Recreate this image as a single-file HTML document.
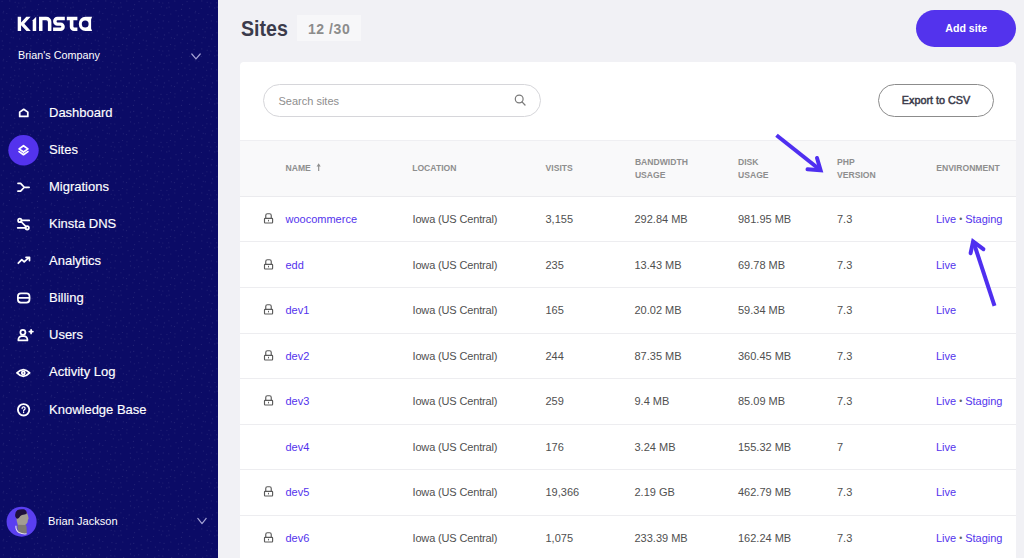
<!DOCTYPE html>
<html><head><meta charset="utf-8">
<style>
*{box-sizing:border-box;margin:0;padding:0}
html,body{width:1024px;height:558px;overflow:hidden;background:#f1f1f5;font-family:"Liberation Sans",sans-serif}
#side{position:absolute;left:0;top:0;width:218px;height:558px;background:#0b0b66}
.abs{position:absolute;white-space:nowrap}
.nav{position:absolute;left:49px;color:#fff;font-size:13px;line-height:16px;white-space:nowrap;-webkit-text-stroke:0.15px #fff}
.ico{position:absolute;overflow:visible}
.th{position:absolute;color:#8e8e8e;font-size:8.6px;font-weight:bold;line-height:13px;text-transform:uppercase;white-space:nowrap}
.td{position:absolute;color:#505050;font-size:11px;line-height:14px;white-space:nowrap}
.lnk{color:#5333ed}
.dot{color:#666;font-size:8.5px;margin:0 3px;position:relative;top:-1px}
.hr{position:absolute;left:240px;width:776.4px;height:1px;background:#ededf0}
</style></head><body>
<div id="side">
  <svg class="ico" style="left:0;top:0" width="218" height="558"><defs><pattern id="dp" width="48" height="48" patternUnits="userSpaceOnUse"><g fill="#fff" fill-opacity="0.10"><circle cx="2.1" cy="1.3" r="0.55"/><circle cx="9.8" cy="0.9" r="0.55"/><circle cx="15.2" cy="2.3" r="0.55"/><circle cx="18.8" cy="3.0" r="0.55"/><circle cx="24.7" cy="2.7" r="0.55"/><circle cx="30.8" cy="1.0" r="0.55"/><circle cx="38.6" cy="4.6" r="0.55"/><circle cx="43.1" cy="1.6" r="0.55"/><circle cx="3.6" cy="11.2" r="0.55"/><circle cx="9.4" cy="8.5" r="0.55"/><circle cx="17.4" cy="6.7" r="0.55"/><circle cx="22.8" cy="7.9" r="0.55"/><circle cx="25.2" cy="7.1" r="0.55"/><circle cx="32.0" cy="10.6" r="0.55"/><circle cx="37.4" cy="9.4" r="0.55"/><circle cx="45.7" cy="8.4" r="0.55"/><circle cx="3.2" cy="12.8" r="0.55"/><circle cx="6.8" cy="13.5" r="0.55"/><circle cx="15.9" cy="14.6" r="0.55"/><circle cx="20.1" cy="15.4" r="0.55"/><circle cx="26.8" cy="14.0" r="0.55"/><circle cx="34.5" cy="16.0" r="0.55"/><circle cx="37.7" cy="15.4" r="0.55"/><circle cx="45.1" cy="16.9" r="0.55"/><circle cx="4.1" cy="19.9" r="0.55"/><circle cx="11.4" cy="19.1" r="0.55"/><circle cx="14.6" cy="22.3" r="0.55"/><circle cx="19.3" cy="20.9" r="0.55"/><circle cx="24.7" cy="21.8" r="0.55"/><circle cx="34.3" cy="21.4" r="0.55"/><circle cx="40.9" cy="20.1" r="0.55"/><circle cx="46.0" cy="21.5" r="0.55"/><circle cx="3.4" cy="26.8" r="0.55"/><circle cx="10.7" cy="29.2" r="0.55"/><circle cx="14.9" cy="27.8" r="0.55"/><circle cx="18.8" cy="28.0" r="0.55"/><circle cx="27.7" cy="29.5" r="0.55"/><circle cx="34.6" cy="25.9" r="0.55"/><circle cx="38.4" cy="27.8" r="0.55"/><circle cx="42.6" cy="26.8" r="0.55"/><circle cx="1.3" cy="31.1" r="0.55"/><circle cx="6.8" cy="34.3" r="0.55"/><circle cx="13.1" cy="31.7" r="0.55"/><circle cx="20.5" cy="34.9" r="0.55"/><circle cx="24.9" cy="32.7" r="0.55"/><circle cx="33.2" cy="34.9" r="0.55"/><circle cx="40.6" cy="34.8" r="0.55"/><circle cx="43.9" cy="32.6" r="0.55"/><circle cx="2.3" cy="40.9" r="0.55"/><circle cx="11.3" cy="37.3" r="0.55"/><circle cx="13.4" cy="37.7" r="0.55"/><circle cx="19.7" cy="38.9" r="0.55"/><circle cx="27.4" cy="37.8" r="0.55"/><circle cx="30.5" cy="38.6" r="0.55"/><circle cx="38.3" cy="39.3" r="0.55"/><circle cx="47.3" cy="40.0" r="0.55"/><circle cx="3.1" cy="45.6" r="0.55"/><circle cx="9.9" cy="42.8" r="0.55"/><circle cx="17.0" cy="46.4" r="0.55"/><circle cx="22.9" cy="46.5" r="0.55"/><circle cx="26.5" cy="44.5" r="0.55"/><circle cx="31.0" cy="45.7" r="0.55"/><circle cx="36.8" cy="42.8" r="0.55"/><circle cx="43.5" cy="43.3" r="0.55"/></g></pattern></defs><rect width="218" height="558" fill="url(#dp)"/></svg>
  <svg class="ico" style="left:0;top:0" width="100" height="40" viewBox="0 0 100 40">
    <g fill="#fff">
      <path d="M17.7 16.7H21.1V22.6L26.3 16.7H30.6L24.3 23.8L30.8 31.1H26.5L21.1 25.2V31.1H17.7Z"/>
      <path d="M32.7 20.3L36.2 16.7V31.1H32.7Z"/>
      <path d="M39 16.7H46.4A5 5 0 0 1 51.4 21.7V31.1H47.9V22A1.7 1.7 0 0 0 46.2 20.3H42.5V31.1H39Z"/>
      <path d="M57.6 16.7H64.8V20.3H57.6A1 1 0 0 0 56.6 21.3V21.6A0.9 0.9 0 0 0 57.5 22.5H60.5A4.3 4.3 0 0 1 64.8 26.8V26.9A4.2 4.2 0 0 1 60.6 31.1H53.1V27.5H60.3A1 1 0 0 0 61.3 26.5V26.6A0.9 0.9 0 0 0 60.4 25.7H57.4A4.3 4.3 0 0 1 53.1 21.4V21A4.3 4.3 0 0 1 57.4 16.7Z"/>
      <path d="M66.8 16.7H77.4V20.3H73.4V26.5A1 1 0 0 0 74.4 27.5H77.4V31.1H74A4.2 4.2 0 0 1 69.8 26.9V20.3H66.8Z"/>
      <path fill-rule="evenodd" d="M85.4 16.7H92.1L91.1 19.4V28.4L92.1 31.1H85.4A6.6 7.2 0 0 1 85.4 16.7ZM85.2 20.4A3.4 3.5 0 1 0 85.2 27.4A3.4 3.5 0 1 0 85.2 20.4Z"/>
    </g>
  </svg>
  <div class="abs" style="left:18px;top:48px;color:#fff;font-size:10.8px;line-height:14px">Brian's Company</div>
  <svg class="ico" style="left:0;top:0" width="218" height="558" viewBox="0 0 218 558">
    <g fill="none" stroke="#a4a2d4" stroke-width="1.2" stroke-linecap="round" stroke-linejoin="round">
      <path d="M191.8 54L196 58.8L200.2 54"/>
      <path d="M197.8 518.4L202 523.6L206.2 518.4"/>
    </g>
    <circle cx="23.5" cy="150.3" r="15.2" fill="#5333ed"/>
    <g fill="none" stroke="#fff" stroke-width="1.75" stroke-linecap="round" stroke-linejoin="round">
      <path d="M19.7 116.4V112.1L23.75 109.3L27.8 112.1V116.4Z"/>
      <path d="M23.5 145.7L27.9 148.9L23.5 152L19.1 148.9Z"/>
      <path d="M19.1 151.6L23.5 154.7L27.9 151.6"/>
      <path d="M18 183.3H20.6L24.3 187.25L20.6 191.2H18M24.3 187.25H29.1"/>
      <path d="M21.5 220.4H29.2M17.7 227.8H25.5M20.9 221.5L26 226.6"/>
      <circle cx="19.8" cy="220.4" r="1.7"/>
      <circle cx="27.2" cy="227.8" r="1.7"/>
      <path d="M18.3 263.2L21.8 259.7L24.2 261.9L29.1 257.4M26 257.3H29.5V260.6"/>
      <rect x="17.9" y="293.3" width="11.6" height="9.2" rx="3"/>
      <path d="M18 297.9H29.4"/>
      <circle cx="22.9" cy="332.3" r="2.5"/>
      <path d="M18.4 340.4V339.6A3.4 3.4 0 0 1 21.8 336.2H24A3.4 3.4 0 0 1 27.4 339.6V340.4Z"/>
      <path d="M31.1 329.8V333.4M29.3 331.6H32.9"/>
      <path d="M17 372.9Q23.3 366.3 29.6 372.9Q23.3 379.5 17 372.9Z" stroke-width="1.9"/>
      <circle cx="23.3" cy="372.9" r="1.5" stroke-width="1.8"/>
      <circle cx="23.6" cy="409.8" r="5.7" stroke-width="1.85"/>
      <path d="M22.1 408.5A1.5 1.5 0 1 1 24.2 409.8Q23.6 410.2 23.6 411" stroke-width="1.3"/>
    </g>
    <circle cx="23.6" cy="412.5" r="0.7" fill="#fff"/>
    <circle cx="21.6" cy="521.7" r="15" fill="#5a3ff0"/>
    <path d="M17.7 523L24.9 523.5Q26.6 525.6 26.6 527L26.8 533.3Q22 534.2 18.5 532Q16.8 529 17.7 524.1Z" fill="#7e7a73"/>
    <path d="M15.9 525.8Q15.6 530.5 19 532.6Q22.5 534.4 26.6 533.8" fill="none" stroke="#e9e7e2" stroke-width="1.1"/>
    <path d="M16.6 517L21 512L26.7 512Q28.3 516 28.6 518.4L27.9 520Q27.7 521.5 27.5 522.6Q26.5 524.6 24.9 524.9L17.9 524.8Q16.2 522 16.6 517Z" fill="#a39d92"/>
    <path d="M15.1 515Q15.2 511.3 17.5 510Q20 508.8 24.1 509.3Q26.8 510.4 26.9 513Q26.8 514.2 24.5 514.6Q21.5 515 20.3 516Q19.5 517.5 18.5 518.3Q17.2 519.2 16.3 518.3Q15 517 15.1 515Z" fill="#1e0f3c"/>
  </svg>

  <div class="nav" style="top:104.5px">Dashboard</div>
  <div class="nav" style="top:141.5px">Sites</div>
  <div class="nav" style="top:178.5px">Migrations</div>
  <div class="nav" style="top:215.5px">Kinsta DNS</div>
  <div class="nav" style="top:252.5px">Analytics</div>
  <div class="nav" style="top:289.5px">Billing</div>
  <div class="nav" style="top:326.5px">Users</div>
  <div class="nav" style="top:363.5px">Activity Log</div>
  <div class="nav" style="top:401.5px">Knowledge Base</div>

  <div class="abs" style="left:48px;top:513.7px;color:#fff;font-size:11.1px;line-height:14px">Brian Jackson</div>
</div>

<div class="abs" style="left:241px;top:17px;color:#3b3b4b;font-size:22.5px;font-weight:bold;line-height:24px;transform:scaleX(0.87);transform-origin:0 0">Sites</div>
<div class="abs" style="left:297px;top:15px;width:64px;height:26px;background:#f7f7f9"></div>
<div class="abs" style="left:308px;top:20px;color:#8c8c8c;font-size:14px;font-weight:bold;line-height:18px;letter-spacing:0.55px">12 /30</div>
<div class="abs" style="left:916px;top:10px;width:100.4px;height:37px;border-radius:19px;background:#5333ed;color:#fff;font-size:10.6px;font-weight:bold;text-align:center;line-height:37.5px">Add site</div>

<div class="abs" style="left:240px;top:61.5px;width:776.4px;height:520px;background:#fff;border-radius:4px"></div>
<div class="abs" style="left:263px;top:84.3px;width:277.5px;height:32.3px;border:1px solid #d6d6da;border-radius:17px"></div>
<div class="abs" style="left:278.5px;top:94px;color:#8e8e8e;font-size:11px;line-height:14px">Search sites</div>
<svg class="ico" style="left:0;top:0" width="1024" height="200" viewBox="0 0 1024 200">
  <circle cx="519.2" cy="99" r="3.9" fill="none" stroke="#7a7a7a" stroke-width="1.2"/>
  <path d="M522 101.9L525 105" stroke="#7a7a7a" stroke-width="1.3" stroke-linecap="round"/>
</svg>
<div class="abs" style="left:878.3px;top:84.1px;width:115.5px;height:32.6px;border:1px solid #8c8c8c;border-radius:17px;color:#3b3b4b;font-size:10.8px;-webkit-text-stroke:0.5px #3b3b4b;text-align:center;line-height:31.4px">Export to CSV</div>

<div class="abs" style="left:240px;top:140px;width:776.4px;height:57.2px;background:#f9f9fa;border-top:1px solid #efeff2;border-bottom:1px solid #ebebee"></div>
<div class="th" style="left:285.5px;top:162px">Name</div>
<svg class="ico" style="left:0;top:0" width="400" height="200" viewBox="0 0 400 200"><path d="M316.6 166.6L318.65 163.3L320.7 166.6Z" fill="#8e8e8e"/><rect x="318.1" y="165" width="1.15" height="6" fill="#8e8e8e"/></svg>
<div class="th" style="left:412.2px;top:162px">Location</div>
<div class="th" style="left:545.6px;top:162px">Visits</div>
<div class="th" style="left:634.9px;top:155.5px">Bandwidth<br>Usage</div>
<div class="th" style="left:738px;top:155.5px">Disk<br>Usage</div>
<div class="th" style="left:837px;top:155.5px">PHP<br>Version</div>
<div class="th" style="left:936.2px;top:162px">Environment</div>

<svg class="ico" style="left:262px;top:213.10px" width="13" height="11" viewBox="0 0 13 11"><path d="M3.75 5.3V2.4A1.65 1.65 0 0 1 5.4 0.75H7.6A1.65 1.65 0 0 1 9.25 2.4V5.3" fill="none" stroke="#5a5a5a" stroke-width="1.15"/><rect x="2.5" y="5.4" width="8.1" height="4.55" rx="0.6" fill="none" stroke="#5a5a5a" stroke-width="1.15"/><rect x="6.05" y="6.8" width="0.95" height="1.6" fill="#5a5a5a"/></svg>
<div class="td lnk" style="left:285.5px;top:212.00px">woocommerce</div>
<div class="td" style="left:412.5px;top:212.00px;letter-spacing:-0.15px">Iowa (US Central)</div>
<div class="td" style="left:545.5px;top:212.00px">3,155</div>
<div class="td" style="left:634.5px;top:212.00px">292.84 MB</div>
<div class="td" style="left:738px;top:212.00px">981.95 MB</div>
<div class="td" style="left:837px;top:212.00px">7.3</div>
<div class="td" style="left:936px;top:212.00px"><span class="lnk">Live</span><span class="dot">&#8226;</span><span class="lnk">Staging</span></div>
<div class="hr" style="top:241.44px"></div>
<svg class="ico" style="left:262px;top:258.64px" width="13" height="11" viewBox="0 0 13 11"><path d="M3.75 5.3V2.4A1.65 1.65 0 0 1 5.4 0.75H7.6A1.65 1.65 0 0 1 9.25 2.4V5.3" fill="none" stroke="#5a5a5a" stroke-width="1.15"/><rect x="2.5" y="5.4" width="8.1" height="4.55" rx="0.6" fill="none" stroke="#5a5a5a" stroke-width="1.15"/><rect x="6.05" y="6.8" width="0.95" height="1.6" fill="#5a5a5a"/></svg>
<div class="td lnk" style="left:285.5px;top:257.54px">edd</div>
<div class="td" style="left:412.5px;top:257.54px;letter-spacing:-0.15px">Iowa (US Central)</div>
<div class="td" style="left:545.5px;top:257.54px">235</div>
<div class="td" style="left:634.5px;top:257.54px">13.43 MB</div>
<div class="td" style="left:738px;top:257.54px">69.78 MB</div>
<div class="td" style="left:837px;top:257.54px">7.3</div>
<div class="td" style="left:936px;top:257.54px"><span class="lnk">Live</span></div>
<div class="hr" style="top:286.98px"></div>
<svg class="ico" style="left:262px;top:304.18px" width="13" height="11" viewBox="0 0 13 11"><path d="M3.75 5.3V2.4A1.65 1.65 0 0 1 5.4 0.75H7.6A1.65 1.65 0 0 1 9.25 2.4V5.3" fill="none" stroke="#5a5a5a" stroke-width="1.15"/><rect x="2.5" y="5.4" width="8.1" height="4.55" rx="0.6" fill="none" stroke="#5a5a5a" stroke-width="1.15"/><rect x="6.05" y="6.8" width="0.95" height="1.6" fill="#5a5a5a"/></svg>
<div class="td lnk" style="left:285.5px;top:303.08px">dev1</div>
<div class="td" style="left:412.5px;top:303.08px;letter-spacing:-0.15px">Iowa (US Central)</div>
<div class="td" style="left:545.5px;top:303.08px">165</div>
<div class="td" style="left:634.5px;top:303.08px">20.02 MB</div>
<div class="td" style="left:738px;top:303.08px">59.34 MB</div>
<div class="td" style="left:837px;top:303.08px">7.3</div>
<div class="td" style="left:936px;top:303.08px"><span class="lnk">Live</span></div>
<div class="hr" style="top:332.52px"></div>
<svg class="ico" style="left:262px;top:349.72px" width="13" height="11" viewBox="0 0 13 11"><path d="M3.75 5.3V2.4A1.65 1.65 0 0 1 5.4 0.75H7.6A1.65 1.65 0 0 1 9.25 2.4V5.3" fill="none" stroke="#5a5a5a" stroke-width="1.15"/><rect x="2.5" y="5.4" width="8.1" height="4.55" rx="0.6" fill="none" stroke="#5a5a5a" stroke-width="1.15"/><rect x="6.05" y="6.8" width="0.95" height="1.6" fill="#5a5a5a"/></svg>
<div class="td lnk" style="left:285.5px;top:348.62px">dev2</div>
<div class="td" style="left:412.5px;top:348.62px;letter-spacing:-0.15px">Iowa (US Central)</div>
<div class="td" style="left:545.5px;top:348.62px">244</div>
<div class="td" style="left:634.5px;top:348.62px">87.35 MB</div>
<div class="td" style="left:738px;top:348.62px">360.45 MB</div>
<div class="td" style="left:837px;top:348.62px">7.3</div>
<div class="td" style="left:936px;top:348.62px"><span class="lnk">Live</span></div>
<div class="hr" style="top:378.06px"></div>
<svg class="ico" style="left:262px;top:395.26px" width="13" height="11" viewBox="0 0 13 11"><path d="M3.75 5.3V2.4A1.65 1.65 0 0 1 5.4 0.75H7.6A1.65 1.65 0 0 1 9.25 2.4V5.3" fill="none" stroke="#5a5a5a" stroke-width="1.15"/><rect x="2.5" y="5.4" width="8.1" height="4.55" rx="0.6" fill="none" stroke="#5a5a5a" stroke-width="1.15"/><rect x="6.05" y="6.8" width="0.95" height="1.6" fill="#5a5a5a"/></svg>
<div class="td lnk" style="left:285.5px;top:394.16px">dev3</div>
<div class="td" style="left:412.5px;top:394.16px;letter-spacing:-0.15px">Iowa (US Central)</div>
<div class="td" style="left:545.5px;top:394.16px">259</div>
<div class="td" style="left:634.5px;top:394.16px">9.4 MB</div>
<div class="td" style="left:738px;top:394.16px">85.09 MB</div>
<div class="td" style="left:837px;top:394.16px">7.3</div>
<div class="td" style="left:936px;top:394.16px"><span class="lnk">Live</span><span class="dot">&#8226;</span><span class="lnk">Staging</span></div>
<div class="hr" style="top:423.60px"></div>
<div class="td lnk" style="left:285.5px;top:439.70px">dev4</div>
<div class="td" style="left:412.5px;top:439.70px;letter-spacing:-0.15px">Iowa (US Central)</div>
<div class="td" style="left:545.5px;top:439.70px">176</div>
<div class="td" style="left:634.5px;top:439.70px">3.24 MB</div>
<div class="td" style="left:738px;top:439.70px">155.32 MB</div>
<div class="td" style="left:837px;top:439.70px">7</div>
<div class="td" style="left:936px;top:439.70px"><span class="lnk">Live</span></div>
<div class="hr" style="top:469.14px"></div>
<svg class="ico" style="left:262px;top:486.34px" width="13" height="11" viewBox="0 0 13 11"><path d="M3.75 5.3V2.4A1.65 1.65 0 0 1 5.4 0.75H7.6A1.65 1.65 0 0 1 9.25 2.4V5.3" fill="none" stroke="#5a5a5a" stroke-width="1.15"/><rect x="2.5" y="5.4" width="8.1" height="4.55" rx="0.6" fill="none" stroke="#5a5a5a" stroke-width="1.15"/><rect x="6.05" y="6.8" width="0.95" height="1.6" fill="#5a5a5a"/></svg>
<div class="td lnk" style="left:285.5px;top:485.24px">dev5</div>
<div class="td" style="left:412.5px;top:485.24px;letter-spacing:-0.15px">Iowa (US Central)</div>
<div class="td" style="left:545.5px;top:485.24px">19,366</div>
<div class="td" style="left:634.5px;top:485.24px">2.19 GB</div>
<div class="td" style="left:738px;top:485.24px">462.79 MB</div>
<div class="td" style="left:837px;top:485.24px">7.3</div>
<div class="td" style="left:936px;top:485.24px"><span class="lnk">Live</span></div>
<div class="hr" style="top:514.68px"></div>
<svg class="ico" style="left:262px;top:531.88px" width="13" height="11" viewBox="0 0 13 11"><path d="M3.75 5.3V2.4A1.65 1.65 0 0 1 5.4 0.75H7.6A1.65 1.65 0 0 1 9.25 2.4V5.3" fill="none" stroke="#5a5a5a" stroke-width="1.15"/><rect x="2.5" y="5.4" width="8.1" height="4.55" rx="0.6" fill="none" stroke="#5a5a5a" stroke-width="1.15"/><rect x="6.05" y="6.8" width="0.95" height="1.6" fill="#5a5a5a"/></svg>
<div class="td lnk" style="left:285.5px;top:530.78px">dev6</div>
<div class="td" style="left:412.5px;top:530.78px;letter-spacing:-0.15px">Iowa (US Central)</div>
<div class="td" style="left:545.5px;top:530.78px">1,075</div>
<div class="td" style="left:634.5px;top:530.78px">233.39 MB</div>
<div class="td" style="left:738px;top:530.78px">162.24 MB</div>
<div class="td" style="left:837px;top:530.78px">7.3</div>
<div class="td" style="left:936px;top:530.78px"><span class="lnk">Live</span><span class="dot">&#8226;</span><span class="lnk">Staging</span></div>

<svg class="ico" style="left:0;top:0" width="1024" height="558" viewBox="0 0 1024 558">
  <g fill="none" stroke="#4f2ff0" stroke-width="4" stroke-linecap="round" stroke-linejoin="miter" stroke-miterlimit="6">
    <path d="M776.5 135.2L820 169.8" stroke-linecap="butt"/>
    <path d="M817 158L820.6 170.2L807.5 169.3"/>
    <path d="M994.5 305.8L973.6 242.3" stroke-linecap="butt"/>
    <path d="M970.6 253.2L973.1 241.4L983.4 249.2"/>
  </g>
</svg>
</body></html>
